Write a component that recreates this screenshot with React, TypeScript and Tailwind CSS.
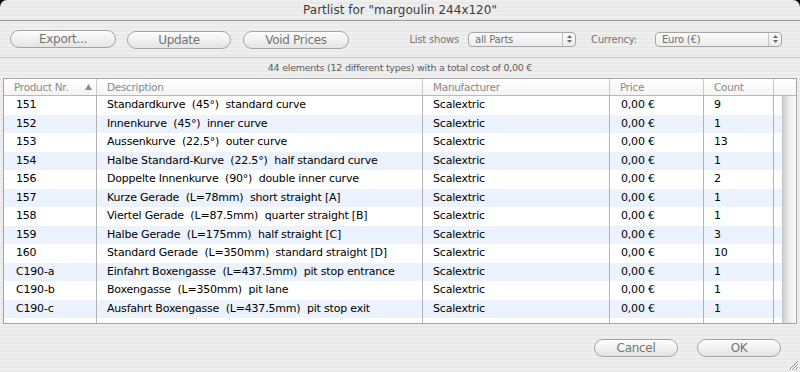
import React from "react";

const rows = [
  { nr: "151", desc: "Standardkurve  (45°)  standard curve", count: "9" },
  { nr: "152", desc: "Innenkurve  (45°)  inner curve", count: "1" },
  { nr: "153", desc: "Aussenkurve  (22.5°)  outer curve", count: "13" },
  { nr: "154", desc: "Halbe Standard-Kurve  (22.5°)  half standard curve", count: "1" },
  { nr: "156", desc: "Doppelte Innenkurve  (90°)  double inner curve", count: "2" },
  { nr: "157", desc: "Kurze Gerade  (L=78mm)  short straight [A]", count: "1" },
  { nr: "158", desc: "Viertel Gerade  (L=87.5mm)  quarter straight [B]", count: "1" },
  { nr: "159", desc: "Halbe Gerade  (L=175mm)  half straight [C]", count: "3" },
  { nr: "160", desc: "Standard Gerade  (L=350mm)  standard straight [D]", count: "10" },
  { nr: "C190-a", desc: "Einfahrt Boxengasse  (L=437.5mm)  pit stop entrance", count: "1" },
  { nr: "C190-b", desc: "Boxengasse  (L=350mm)  pit lane", count: "1" },
  { nr: "C190-c", desc: "Ausfahrt Boxengasse  (L=437.5mm)  pit stop exit", count: "1" },
];

function AquaButton({ label, w }: { label: string; w: string }) {
  return (
    <button
      className={`${w} h-[18px] shrink-0 rounded-full border border-[#a3a3a3] bg-linear-to-b from-[#fdfdfd] via-[#f1f1f1] to-[#e4e4e4] text-[12px] leading-none tracking-[-0.3px] text-[#747474] shadow-[inset_0_1px_0_#ffffff]`}
    >
      {label}
    </button>
  );
}

function Popup({ label, w }: { label: string; w: string }) {
  return (
    <div
      className={`${w} flex h-[15px] shrink-0 items-stretch rounded-[4px] border border-[#a6a6a6] bg-linear-to-b from-[#fbfbfb] to-[#ececec]`}
    >
      <span className="flex-1 pl-[6px] text-[10px] leading-[13px] tracking-[-0.2px] text-[#707070]">{label}</span>
      <span className="flex w-[13px] flex-col items-center justify-center gap-[2px] border-l border-[#c4c4c4]">
        <svg width="5" height="3" viewBox="0 0 5 3">
          <polygon points="2.5,0 5,3 0,3" fill="#6a6a6a" />
        </svg>
        <svg width="5" height="3" viewBox="0 0 5 3">
          <polygon points="0,0 5,0 2.5,3" fill="#6a6a6a" />
        </svg>
      </span>
    </div>
  );
}

const cols = ["w-[93px]", "w-[326px]", "w-[187px]", "w-[94px]", "w-[70px]"];

export default function App() {
  return (
    <div className="h-[372px] w-[800px] overflow-hidden bg-black" style={{ fontFamily: "'DejaVu Sans', sans-serif" }}>
      <div className="relative flex h-full flex-col rounded-t-[7px] bg-[image:repeating-linear-gradient(180deg,#efefef_0px,#efefef_2px,#e9e9e9_2px,#e9e9e9_4px)]">
        {/* title bar */}
        <div className="flex h-[21px] shrink-0 items-center justify-center border-b border-[#9a9a9a] text-[12px] text-[#3c3c3c]">
          Partlist for "margoulin 244x120"
        </div>

        {/* toolbar */}
        <div className="flex h-[37px] shrink-0 items-center border-b border-[#c6c6c6] pl-[10px] pr-[18px]">
          <AquaButton label="Export..." w="w-[106px]" />
          <div className="ml-[11px]">
            <AquaButton label="Update" w="w-[104px]" />
          </div>
          <div className="ml-[12px]">
            <AquaButton label="Void Prices" w="w-[106px]" />
          </div>
          <div className="ml-auto flex items-center">
            <span className="text-[10px] tracking-[-0.2px] text-[#767676]">List shows</span>
            <div className="ml-[9px]">
              <Popup label="all Parts" w="w-[108px]" />
            </div>
            <span className="ml-[15px] text-[10px] tracking-[-0.2px] text-[#767676]">Currency:</span>
            <div className="ml-[18px]">
              <Popup label="Euro (€)" w="w-[127px]" />
            </div>
          </div>
        </div>

        {/* status */}
        <div className="flex h-[20px] shrink-0 items-center justify-center text-[9.5px] tracking-[-0.25px] text-[#5e5e5e]">
          44 elements (12 different types) with a total cost of 0,00 €
        </div>

        {/* table */}
        <div className="mx-[3px] flex h-[246px] shrink-0 flex-col border border-[#a4a4a4] bg-white">
          <div className="flex h-[17px] shrink-0 border-b border-[#b9b9b9] bg-linear-to-b from-white to-[#f4f4f4] text-[10.5px] leading-[16px] tracking-[-0.3px] text-[#8a8a8a]">
            <div className={`${cols[0]} flex items-center border-r border-[#c9c9c9] pl-[10px] pr-[4px]`}>
              <span className="flex-1">Product Nr.</span>
              <svg width="7" height="6" viewBox="0 0 7 6">
                <polygon points="3.5,0 7,6 0,6" fill="#8a8a8a" />
              </svg>
            </div>
            <div className={`${cols[1]} border-r border-[#c9c9c9] pl-[10px]`}>Description</div>
            <div className={`${cols[2]} border-r border-[#c9c9c9] pl-[10px]`}>Manufacturer</div>
            <div className={`${cols[3]} border-r border-[#c9c9c9] pl-[10px]`}>Price</div>
            <div className={`${cols[4]} border-r border-[#c9c9c9] pl-[10px]`}>Count</div>
            <div className="flex-1" />
          </div>

          <div className="flex min-h-0 flex-1">
            <div className="flex flex-1 flex-col text-[11px] tracking-[-0.2px] text-black">
              {rows.map((r, i) => (
                <div key={r.nr} className={`flex h-[18.5px] shrink-0 items-center ${i % 2 ? "bg-[#edf3fe]" : "bg-white"}`}>
                  <div className={`${cols[0]} flex h-full items-center border-r border-[#b3b3b3] pl-[12px]`}>{r.nr}</div>
                  <div className={`${cols[1]} flex h-full items-center whitespace-pre border-r border-[#b3b3b3] pl-[10px]`}>{r.desc}</div>
                  <div className={`${cols[2]} flex h-full items-center border-r border-[#b3b3b3] pl-[10px]`}>Scalextric</div>
                  <div className={`${cols[3]} flex h-full items-center border-r border-[#b3b3b3] pl-[11px]`}>0,00 €</div>
                  <div className={`${cols[4]} flex h-full items-center border-r border-[#b3b3b3] pl-[10px]`}>{r.count}</div>
                  <div className="flex-1" />
                </div>
              ))}
              <div className="flex flex-1">
                {cols.map((c) => (
                  <div key={c} className={`${c} border-r border-[#b3b3b3]`} />
                ))}
              </div>
            </div>
            <div className="w-[14px] shrink-0 border-l border-[#c4c4c4] bg-linear-to-r from-[#cfcfcf] via-[#ececec] to-[#fafafa]" />
          </div>
        </div>

        {/* footer */}
        <div className="flex flex-1 items-start justify-end gap-[19px] pr-[19px] pt-[15px]">
          <AquaButton label="Cancel" w="w-[84px]" />
          <AquaButton label="OK" w="w-[84px]" />
        </div>

        <svg className="absolute bottom-[1px] right-[1px]" width="12" height="12" viewBox="0 0 12 12">
          <line x1="11" y1="2" x2="2" y2="11" stroke="#8f8f8f" strokeWidth="1" />
          <line x1="11" y1="5" x2="5" y2="11" stroke="#8f8f8f" strokeWidth="1" />
          <line x1="11" y1="8" x2="8" y2="11" stroke="#8f8f8f" strokeWidth="1" />
          <line x1="11.5" y1="3" x2="3" y2="11.5" stroke="#ffffff" strokeWidth="1" />
          <line x1="11.5" y1="6" x2="6" y2="11.5" stroke="#ffffff" strokeWidth="1" />
        </svg>
      </div>
    </div>
  );
}
